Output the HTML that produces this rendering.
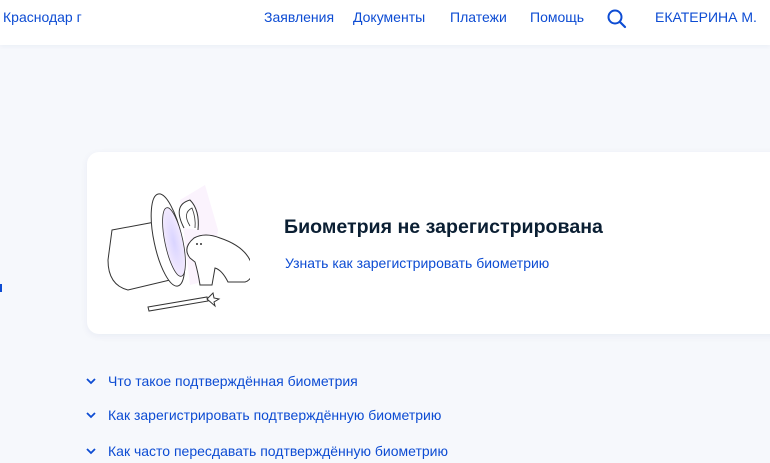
<!DOCTYPE html>
<html><head><meta charset="utf-8"><style>
body{margin:0;width:770px;height:463px;overflow:hidden;background:#f6f8fc;font-family:"Liberation Sans",sans-serif;position:relative}
.hdr{position:absolute;left:0;top:0;width:770px;height:45px;background:#fff;box-shadow:0 2px 4px rgba(0,40,120,0.04)}
.a{position:absolute;top:9px;color:#0d4cd3;font-size:14px;white-space:nowrap}
.card{position:absolute;left:87px;top:152px;width:720px;height:182px;background:#fff;border-radius:12px;box-shadow:0 2px 8px rgba(0,40,120,0.06)}
.t{position:absolute;left:284px;top:216px;font-size:19.6px;font-weight:bold;color:#0b1f33}
.l{position:absolute;color:#0d4cd3;font-size:14px;white-space:nowrap}
.chev{position:absolute;left:86px;width:10px;height:10px}
</style></head><body>
<div class="hdr">
<span class="a" style="left:3px">Краснодар г</span>
<span class="a" style="left:264px">Заявления</span>
<span class="a" style="left:353px">Документы</span>
<span class="a" style="left:450px">Платежи</span>
<span class="a" style="left:530px">Помощь</span>
<svg style="position:absolute;left:606px;top:8px" width="22" height="22" viewBox="0 0 22 22"><circle cx="9" cy="9" r="6.5" fill="none" stroke="#0d4cd3" stroke-width="2"/><path d="M14 14l5 5" stroke="#0d4cd3" stroke-width="2.2" stroke-linecap="round"/></svg>
<span class="a" style="left:655px">ЕКАТЕРИНА М.</span>
</div>
<div style="position:absolute;left:0;top:284px;width:2px;height:8px;background:#0d4cd3"></div>
<div class="card"></div>
<svg style="position:absolute;left:100px;top:180px" width="150" height="135" viewBox="0 0 150 135">
<defs><radialGradient id="g" cx="0.5" cy="0.5" r="0.6"><stop offset="0" stop-color="#d9d4ff"/><stop offset="1" stop-color="#f7eefe"/></radialGradient></defs>
<path d="M80 20 L105 5 L118 50 L110 100 L90 105Z" fill="#fbf3fd"/>
<path d="M12 50 L55 42 L70 100 L28 110 Q8 105 8 80Z" fill="#fff" stroke="#333" stroke-width="1"/>
<ellipse cx="68" cy="60" rx="14" ry="47" transform="rotate(-12 68 60)" fill="#fff" stroke="#333" stroke-width="1"/>
<ellipse cx="74" cy="62" rx="9" ry="35" transform="rotate(-12 74 62)" fill="url(#g)" stroke="#333" stroke-width="0.8"/>
<path d="M84 48 Q72 25 90 20 Q100 30 98 50" fill="#fff" stroke="#333" stroke-width="1"/>
<path d="M90 46 Q82 33 92 28 Q96 38 95 48" fill="none" stroke="#333" stroke-width="0.8"/>
<path d="M90 78 Q82 68 94 58 Q105 52 120 58 Q150 68 153 90 Q152 100 145 102 L128 102 Q122 90 115 88 L112 105 L100 105 Q98 92 95 82Z" fill="#fff" stroke="#333" stroke-width="1"/>
<circle cx="97" cy="64" r="1" fill="#333"/><circle cx="101" cy="64" r="1" fill="#333"/>
<path d="M48 127 L107 117 L108 121 L49 131Z" fill="#fff" stroke="#333" stroke-width="1"/>
<path d="M107 119 l6 -6 l1 5 l5 1 l-5 3 l1 4z" fill="#fff" stroke="#333" stroke-width="1"/>
</svg>
<div class="t">Биометрия не зарегистрирована</div>
<div class="l" style="left:285px;top:255px">Узнать как зарегистрировать биометрию</div>
<svg class="chev" style="top:376px" viewBox="0 0 10 10"><path d="M1 3l4 4 4-4" fill="none" stroke="#0d4cd3" stroke-width="1.8"/></svg>
<div class="l" style="left:108px;top:373px">Что такое подтверждённая биометрия</div>
<svg class="chev" style="top:410px" viewBox="0 0 10 10"><path d="M1 3l4 4 4-4" fill="none" stroke="#0d4cd3" stroke-width="1.8"/></svg>
<div class="l" style="left:108px;top:407px">Как зарегистрировать подтверждённую биометрию</div>
<svg class="chev" style="top:446px" viewBox="0 0 10 10"><path d="M1 3l4 4 4-4" fill="none" stroke="#0d4cd3" stroke-width="1.8"/></svg>
<div class="l" style="left:108px;top:443px">Как часто пересдавать подтверждённую биометрию</div>
</body></html>
